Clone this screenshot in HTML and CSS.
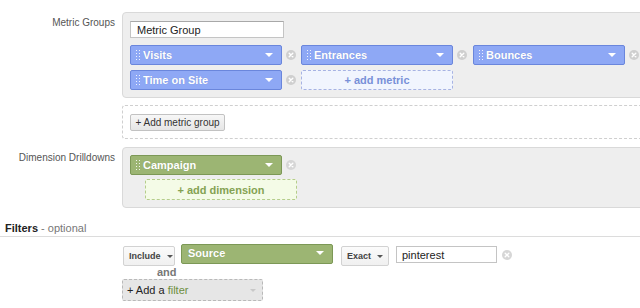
FILE: index.html
```html
<!DOCTYPE html>
<html>
<head>
<meta charset="utf-8">
<link rel="stylesheet" href="styles.css">
</head>
<body>
<div class="page">
  <div class="row row-metrics">
    <div class="label">Metric Groups</div>
    <div class="panel panel-metrics">
      <input class="text-input name-input" type="text" value="Metric Group">
      <div class="pill-grid">
        <div class="cell"><div class="pill blue"><span class="grip"></span><span class="pill-text">Visits</span><span class="caret"></span></div><span class="remove"><svg width="10" height="10" viewBox="0 0 10 10"><circle cx="5" cy="5" r="5" fill="#cfcfcf"/><path d="M3.2 3.2 L6.8 6.8 M6.8 3.2 L3.2 6.8" stroke="#fff" stroke-width="1.4" stroke-linecap="round"/></svg></span></div>
        <div class="cell"><div class="pill blue"><span class="grip"></span><span class="pill-text">Entrances</span><span class="caret"></span></div><span class="remove"><svg width="10" height="10" viewBox="0 0 10 10"><circle cx="5" cy="5" r="5" fill="#cfcfcf"/><path d="M3.2 3.2 L6.8 6.8 M6.8 3.2 L3.2 6.8" stroke="#fff" stroke-width="1.4" stroke-linecap="round"/></svg></span></div>
        <div class="cell"><div class="pill blue"><span class="grip"></span><span class="pill-text">Bounces</span><span class="caret"></span></div><span class="remove"><svg width="10" height="10" viewBox="0 0 10 10"><circle cx="5" cy="5" r="5" fill="#cfcfcf"/><path d="M3.2 3.2 L6.8 6.8 M6.8 3.2 L3.2 6.8" stroke="#fff" stroke-width="1.4" stroke-linecap="round"/></svg></span></div>
        <div class="cell"><div class="pill blue"><span class="grip"></span><span class="pill-text">Time on Site</span><span class="caret"></span></div><span class="remove"><svg width="10" height="10" viewBox="0 0 10 10"><circle cx="5" cy="5" r="5" fill="#cfcfcf"/><path d="M3.2 3.2 L6.8 6.8 M6.8 3.2 L3.2 6.8" stroke="#fff" stroke-width="1.4" stroke-linecap="round"/></svg></span></div>
        <div class="cell"><div class="add-slot add-metric">+ add metric</div></div>
      </div>
    </div>
  </div>

  <div class="row row-addgroup">
    <div class="label"></div>
    <div class="dashed-box">
      <button class="btn add-group">+ Add metric group</button>
    </div>
  </div>

  <div class="row row-dims">
    <div class="label">Dimension Drilldowns</div>
    <div class="panel panel-dims">
      <div class="cell"><div class="pill green"><span class="grip"></span><span class="pill-text">Campaign</span><span class="caret"></span></div><span class="remove"><svg width="10" height="10" viewBox="0 0 10 10"><circle cx="5" cy="5" r="5" fill="#d6d6d6"/><path d="M3.2 3.2 L6.8 6.8 M6.8 3.2 L3.2 6.8" stroke="#fff" stroke-width="1.4" stroke-linecap="round"/></svg></span></div>
      <div class="add-slot add-dimension">+ add dimension</div>
    </div>
  </div>

  <div class="section-head"><b>Filters</b> <span class="optional">- optional</span></div>

  <div class="filters">
    <div class="filter-line">
      <button class="btn select include">Include <span class="dark-caret"></span></button>
      <div class="pill green source"><span class="pill-text">Source</span><span class="caret"></span></div>
      <button class="btn select exact">Exact <span class="dark-caret"></span></button>
      <input class="text-input value-input" type="text" value="pinterest">
      <span class="remove"><svg width="10" height="10" viewBox="0 0 10 10"><circle cx="5" cy="5" r="5" fill="#d6d6d6"/><path d="M3.2 3.2 L6.8 6.8 M6.8 3.2 L3.2 6.8" stroke="#fff" stroke-width="1.4" stroke-linecap="round"/></svg></span>
    </div>
    <div class="and">and</div>
    <div class="add-filter">+ Add a <span class="filter-word">filter</span><span class="light-caret"></span></div>
  </div>
</div>
</body>
</html>
```

FILE: styles.css
```css
html, body {
  margin: 0;
  padding: 0;
  background: #fff;
  overflow: hidden;
}
body {
  font-family: "Liberation Sans", Arial, sans-serif;
  font-size: 11px;
  color: #333;
  width: 640px;
  height: 308px;
}
.page {
  padding-top: 12px;
}
.row {
  display: grid;
  grid-template-columns: 122px 524px;
}
.label {
  text-align: right;
  padding-right: 7px;
  color: #555;
  font-size: 10px;
  line-height: 13px;
  padding-top: 4px;
}
.panel {
  background: #eeeeee;
  border: 1px solid #d9d9d9;
  border-radius: 4px;
  box-sizing: border-box;
}
.panel-metrics {
  padding: 8px 0 7px 7px;
}
.text-input {
  font-family: "Liberation Sans", Arial, sans-serif;
  font-size: 11px;
  color: #222;
  background: #fff;
  border: 1px solid #c4c4c4;
  border-top-color: #a8a8a8;
  box-sizing: border-box;
  margin: 0;
  outline: none;
  display: block;
}
.name-input {
  width: 154px;
  height: 17px;
  padding: 0 0 0 6px;
  margin-bottom: 7px;
}
.pill-grid {
  display: grid;
  grid-template-columns: 171px 172px 172px;
  row-gap: 5px;
}
.cell {
  display: flex;
  align-items: center;
}
.pill {
  width: 152px;
  height: 20px;
  box-sizing: border-box;
  border-radius: 2px;
  display: flex;
  align-items: center;
  color: #fff;
  font-weight: bold;
  font-size: 11px;
  position: relative;
  text-shadow: 0 0 1px rgba(0,0,0,0.15);
}
.pill.blue {
  background: #8ea8f5;
  border: 1px solid #6a86dc;
}
.pill.green {
  background: #9cb573;
  border: 1px solid #7c9856;
}
.grip {
  width: 5px;
  height: 12px;
  margin: 0 3px 0 4px;
  background-image: radial-gradient(circle, rgba(255,255,255,0.85) 0.7px, transparent 0.9px);
  background-size: 3px 3px;
  background-position: 0 0;
}
.pill-text {
  flex: 1;
}
.caret {
  width: 0;
  height: 0;
  border-left: 4px solid transparent;
  border-right: 4px solid transparent;
  border-top: 4px solid #fff;
  margin-right: 8px;
}
.remove {
  display: inline-flex;
  margin-left: 4px;
  width: 10px;
  height: 10px;
}
.add-slot {
  height: 20px;
  box-sizing: border-box;
  display: flex;
  align-items: center;
  justify-content: center;
  font-weight: bold;
  font-size: 11px;
  border-radius: 2px;
}
.add-metric {
  width: 152px;
  background: #f1f5fe;
  border: 1px dashed #a7b3e3;
  color: #7890d8;
}
.row-addgroup {
  margin-top: 7px;
}
.dashed-box {
  border: 1px dashed #cfcfcf;
  border-right: none;
  border-radius: 3px 0 0 3px;
  padding: 8px 0 7px 7px;
}
.btn {
  font-family: "Liberation Sans", Arial, sans-serif;
  margin: 0;
  box-sizing: border-box;
  border-radius: 2px;
  cursor: default;
}
.add-group {
  display: block;
  width: 95px;
  height: 17px;
  padding: 0;
  font-size: 10px;
  color: #333;
  background: linear-gradient(#f7f7f7, #e6e6e6);
  border: 1px solid #c2c2c2;
}
.row-dims {
  margin-top: 8px;
}
.panel-dims {
  padding: 7px 0 7px 7px;
}
.add-dimension {
  width: 152px;
  height: 21px;
  margin: 4px 0 0 15px;
  background: #f4fbe7;
  border: 1px dashed #b5cd8b;
  color: #84a253;
}
.section-head {
  margin-top: 14px;
  padding: 0 0 1px 5px;
  line-height: 13px;
  border-bottom: 1px solid #dcdcdc;
  color: #222;
  font-size: 11px;
}
.optional {
  color: #777;
}
.filters {
  padding: 7px 0 0 122px;
}
.filter-line {
  display: flex;
  align-items: flex-start;
}
.select {
  height: 20px;
  margin-top: 2px;
  padding: 0 0 0 5px;
  display: flex;
  align-items: center;
  font-size: 9px;
  font-weight: bold;
  color: #444;
  background: linear-gradient(#fbfbfb, #f0f0f0);
  border: 1px solid #d2d2d2;
}
.include {
  width: 52px;
  margin-left: 1px;
}
.exact {
  width: 48px;
  margin-left: 8px;
}
.dark-caret {
  display: inline-block;
  width: 0;
  height: 0;
  border-left: 3px solid transparent;
  border-right: 3px solid transparent;
  border-top: 3px solid #555;
  margin-left: 6px;
  margin-top: 1px;
}
.source {
  margin-left: 6px;
  height: 20px;
  align-items: flex-start;
  padding-top: 2px;
}
.source .pill-text {
  padding-left: 6px;
}
.source .caret {
  margin-top: 4px;
}
.value-input {
  width: 101px;
  height: 17px;
  margin-left: 7px;
  margin-top: 2px;
  padding: 0 0 0 5px;
  border-color: #c4c4c4;
}
.filter-line .remove {
  margin-left: 5px;
  margin-top: 6px;
}
.and {
  padding-left: 35px;
  line-height: 12px;
  margin-top: 0;
  color: #777;
  font-weight: bold;
  font-size: 11px;
}
.add-filter {
  width: 141px;
  height: 22px;
  margin-top: 1px;
  box-sizing: border-box;
  background: #e6e6e6;
  border: 1px dashed #b9b9b9;
  border-radius: 2px;
  display: flex;
  align-items: center;
  padding-left: 4px;
  font-size: 11px;
  color: #222;
}
.filter-word {
  color: #6d8e3e;
  margin-left: 3px;
  flex: 1;
}
.light-caret {
  width: 0;
  height: 0;
  border-left: 3px solid transparent;
  border-right: 3px solid transparent;
  border-top: 3px solid #c8c8c8;
  margin-right: 6px;
}
```
